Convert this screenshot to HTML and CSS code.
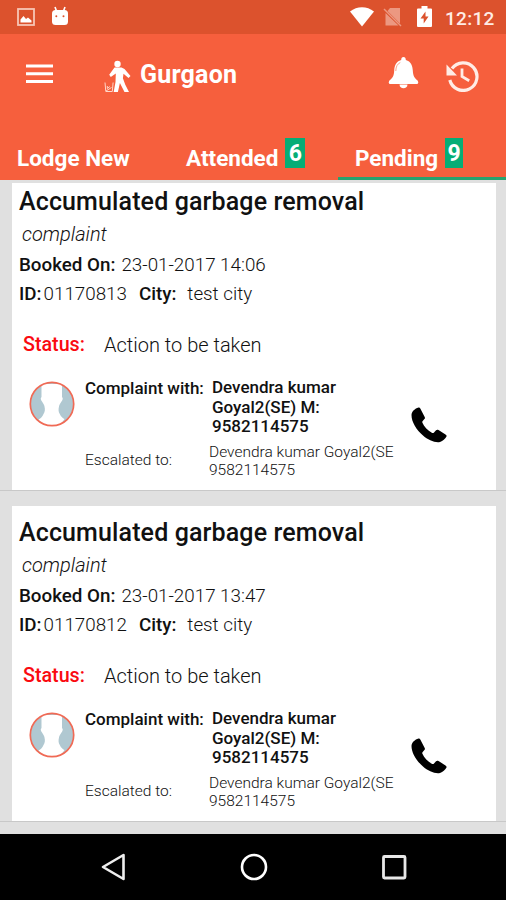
FILE: index.html
```html
<!DOCTYPE html>
<html lang="en">
  <head>
    <meta charset="utf-8">
    <title>Gurgaon</title>
    <link rel="stylesheet" href="styles.css">
  </head>
  <body>
    <!-- icons used in every complaint -->
    <svg class="defs">
      <symbol id="avatar" viewBox="0 0 46 46">
        <circle cx="23" cy="23" r="21.5" fill="#b0c8d1"/>
        <path d="M12.500 3h20.500v13c1.300 1 .8 3-.5 4.500-1 2-2.300 3-2.500 5-.8 3-.5 5.500.8 7.500 1 2.500 2.700 4 4.700 5L32 43c-5 2.500-13 2.500-18 0l-4.500-4.500c2.500-1 4-3 5-5.500 1.300-2 1.800-4.500 1-7.500-.2-2-1.500-3-2.500-5-1.300-1.500-1.800-3.500-.5-4.500z" fill="#fff"/>
        <circle cx="23" cy="23" r="21.700" fill="none" stroke="#f06a55" stroke-width="1.700"/>
      </symbol>
      <symbol id="phone" viewBox="0 0 36 36">
        <path d="M7.500.5C4 1.500.6 4.500.5 8c0 7 5 15 11.500 20.500C17 33 24 36 29 35c3-1 5-3 6.500-5.500.3-1-.2-1.600-1-2.100L27.500 23c-1-.6-2-.4-2.700.4l-2 2.300c-.5.500-1.200.5-2 .1-4-2.300-7.600-6-9.400-10-.3-.8-.2-1.300.3-1.800l1.700-1.900c.6-.7.7-1.300.3-2.200L9.300 1.400C8.900.6 8.300.3 7.500.5z"/>
      </symbol>
    </svg>

    <div class="status-bar">
      <svg class="icon-picture" width="18" height="18" viewBox="0 0 18 18">
        <rect x="1" y="1" width="16" height="16" fill="none" stroke="#f7c5b5" stroke-width="1.800"/>
        <path d="M3.500 14.500v-3l3-3.500 2.500 3 2-1.500 3.500 3v2z" fill="#fff"/>
      </svg>
      <svg class="icon-robot" width="18" height="20" viewBox="0 0 18 20">
        <path d="M4 1l1.500 4M14 1l-1.500 4" stroke="#fff" stroke-width="1.600"/>
        <rect x="1" y="4" width="16" height="15" rx="3.500" fill="#fff"/>
        <circle cx="5.300" cy="10.200" r="1" fill="#dc522d"/>
        <circle cx="12.500" cy="10.200" r="1" fill="#dc522d"/>
      </svg>
      <svg class="icon-wifi" width="24" height="20" viewBox="0 0 24 20">
        <path d="M0 4.500C7-1.300 17-1.300 24 4.500L12 19.500z" fill="#fff"/>
      </svg>
      <svg class="icon-sim" width="19" height="20" viewBox="0 0 19 20">
        <path d="M7 1h10v15.500L4.500 4z M2.500 6v12.500h13z" fill="#ec9881"/>
        <path d="M1 2l17 17" stroke="#ec9881" stroke-width="1.500"/>
      </svg>
      <svg class="icon-battery" width="15" height="22" viewBox="0 0 15 22">
        <path d="M4.500 0h6v2.500H14q1 0 1 1V20q0 1-1 1H1q-1 0-1-1V3.500q0-1 1-1h3.500z" fill="#fff"/>
        <path d="M8.500 5.500L3.500 12.500h3.200v5L11.500 10.500H8.500z" fill="#dc522d"/>
      </svg>
      <span class="clock">12:12</span>
    </div>

    <div class="toolbar">
      <svg class="icon-menu" width="27" height="20" viewBox="0 0 27 20">
        <path d="M0 2h27M0 9.800h27M0 17.600h27" stroke="#fff" stroke-width="3"/>
      </svg>
      <svg class="icon-walker" width="28" height="33" viewBox="0 0 28 33">
        <circle cx="13.500" cy="4" r="3.200" fill="#fff"/>
        <path d="M10.500 7.500h7l3 1.500 6 7-2 2-5-4.300-.6 4.500 2.400 6.500 3.700 7.300h-4.500l-4.600-9-2 9h-4.200l1.800-10L11.800 13.500l-5 3.500-1.600-2.200z" fill="#fff"/>
        <path d="M1 22.500l.8 9h6.500l.8-9M3.300 26v2.500l2.500-2M2 31l5.500-3.500" fill="none" stroke="#ffd6c8" stroke-width="1"/>
      </svg>
      <h1 class="city-name">Gurgaon</h1>
      <svg class="icon-bell" width="31" height="34" viewBox="0 0 31 34">
        <path d="M15.500 1c1.500 0 2.300 1.300 2.300 3 5.200 1.500 6.700 5.500 7 10.500.3 5.500 1.700 7.500 5 10.300q1.200 1.700-.3 3.200H1.500Q0 26.500 1.200 24.800C4.500 22 6 20 6.200 14.500c.3-5 1.800-9 7-10.500 0-1.700.8-3 2.300-3z" fill="#fff"/>
        <path d="M11.500 28.500h8c0 5-8 5-8 0z" fill="#fff"/>
        <path d="M7.800 15c.1-4.500 1.500-7 4.500-8.500" fill="none" stroke="#f9a48c" stroke-width="1"/>
      </svg>
      <svg class="icon-history" width="33" height="32" viewBox="0 0 33 32">
        <path d="M6 8.500A13.800 13.800 0 1 1 3.800 20" fill="none" stroke="#ffece5" stroke-width="3.200"/>
        <path d="M.5 4.500V15.500H11z" fill="#ffece5"/>
        <path d="M16 8.500v8l7.200 4.300" fill="none" stroke="#ffece5" stroke-width="2.800"/>
      </svg>
    </div>

    <div class="tabs">
      <div class="tab">Lodge New</div>
      <div class="tab">Attended <span class="count">6</span></div>
      <div class="tab active">Pending <span class="count">9</span></div>
    </div>

    <div class="list">
      <div class="item">
        <div class="card">
          <h2 class="title">Accumulated garbage removal</h2>
          <div class="type">complaint</div>
          <div class="line booked"><b>Booked On:</b><span>23-01-2017 14:06</span></div>
          <div class="line ident"><b>ID:</b><span class="number">01170813</span><b class="city">City:</b><span>test city</span></div>
          <div class="status"><b>Status:</b><span>Action to be taken</span></div>
          <div class="contact">
            <svg class="avatar"><use href="#avatar"/></svg>
            <div class="people">
              <b class="label">Complaint with:</b>
              <b class="person">Devendra kumar<br>Goyal2(SE) M:<br>9582114575</b>
              <span class="label-small">Escalated to:</span>
              <span class="person-small">Devendra kumar Goyal2(SE<br>9582114575</span>
            </div>
            <svg class="phone"><use href="#phone"/></svg>
          </div>
        </div>
      </div>

      <div class="item">
        <div class="card">
          <h2 class="title">Accumulated garbage removal</h2>
          <div class="type">complaint</div>
          <div class="line booked"><b>Booked On:</b><span>23-01-2017 13:47</span></div>
          <div class="line ident"><b>ID:</b><span class="number">01170812</span><b class="city">City:</b><span>test city</span></div>
          <div class="status"><b>Status:</b><span>Action to be taken</span></div>
          <div class="contact">
            <svg class="avatar"><use href="#avatar"/></svg>
            <div class="people">
              <b class="label">Complaint with:</b>
              <b class="person">Devendra kumar<br>Goyal2(SE) M:<br>9582114575</b>
              <span class="label-small">Escalated to:</span>
              <span class="person-small">Devendra kumar Goyal2(SE<br>9582114575</span>
            </div>
            <svg class="phone"><use href="#phone"/></svg>
          </div>
        </div>
      </div>
    </div>

    <div class="nav-bar">
      <svg width="28" height="30" viewBox="0 0 28 30">
        <path d="M24.500 3v24L4 15z" fill="none" stroke="#eee" stroke-width="2.600" stroke-linejoin="round"/>
      </svg>
      <svg width="28" height="30" viewBox="0 0 28 30">
        <circle cx="14" cy="15" r="12" fill="none" stroke="#fff" stroke-width="2.600"/>
      </svg>
      <svg width="28" height="30" viewBox="0 0 28 30">
        <rect x="3.500" y="4.500" width="21.500" height="21.500" rx="1" fill="none" stroke="#e8e8e8" stroke-width="2.800"/>
      </svg>
    </div>
  </body>
</html>
```

FILE: styles.css
```css
body {
  margin: 0;
  width: 506px;
  height: 900px;
  overflow: hidden;
  display: flex;
  flex-direction: column;
  background: #e0e0e0;
  color: #111;
  font-family: Roboto, "Liberation Sans", sans-serif;
}

b {
  font-weight: 500;
}

svg {
  display: block;
  flex: none;
}

.defs {
  width: 0;
  height: 0;
}

/* status bar */
.status-bar {
  flex: none;
  display: flex;
  align-items: center;
  height: 34px;
  box-sizing: border-box;
  padding-left: 17px;
  background: #dc522d;
}

.icon-robot {
  margin: -3px 0 0 16px;
}

.icon-wifi {
  margin-left: 281px;
}

.icon-sim {
  margin-left: 9px;
}

.icon-battery {
  margin-left: 15px;
}

.clock {
  margin: 2px 0 0 13px;
  color: #ffece5;
  font-size: 19px;
  font-weight: 500;
  letter-spacing: 0.3px;
}

/* toolbar */
.toolbar {
  flex: none;
  display: flex;
  align-items: center;
  height: 82px;
  padding-left: 26px;
  background: #f65f3d;
}

.icon-menu {
  margin-top: -3px;
}

.icon-walker {
  margin: 2px 0 0 51px;
}

.city-name {
  width: 97px;
  margin: 0 0 0 8px;
  color: #fff;
  font-size: 25px;
  line-height: 28px;
  font-weight: 700;
  letter-spacing: 0.2px;
}

.icon-bell {
  margin: -4px 0 0 151px;
}

.icon-history {
  margin: 1px 0 0 27px;
}

/* tabs */
.tabs {
  flex: none;
  display: flex;
  height: 64px;
  background: #f65f3d;
  border-bottom: 3px solid #e0e0e0;
}

.tab {
  width: 169px;
  height: 64px;
  box-sizing: border-box;
  padding: 20px 0 0 17px;
  display: flex;
  align-items: flex-start;
  color: #fff;
  font-size: 22.5px;
  font-weight: 700;
  line-height: 44px;
}

.active {
  width: 168px;
  border-bottom: 3px solid #28a36f;
}

.count {
  width: 20px;
  height: 30px;
  margin: 2px 0 0 7px;
  background: #05ad75;
  font-size: 23px;
  line-height: 31px;
  text-align: center;
}

.active .count {
  width: 18px;
}

/* complaints */
.list {
  flex: 1;
  overflow: hidden;
}

.item {
  height: 330px;
  border-bottom: 1px solid #c8c8c8;
  box-sizing: border-box;
  padding: 14px 10px 0 12px;
  margin-bottom: 1px;
}

/* the list is scrolled a little, so the first item starts under the tabs */
.item:first-child {
  margin-top: -22px;
}

.card {
  height: 315px;
  box-sizing: border-box;
  padding: 10px 0 0 7px;
  background: #fff;
}

.title {
  margin: 0;
  font-size: 25px;
  font-weight: 500;
  line-height: 33px;
  letter-spacing: 0.13px;
}

.type {
  margin-left: 3px;
  font-size: 20px;
  font-style: italic;
  font-weight: 300;
  line-height: 32px;
}

.line {
  display: flex;
  font-size: 18.8px;
  font-weight: 300;
  line-height: 30px;
}

.ident {
  line-height: 28px;
}

.booked span {
  margin-left: 6px;
}

.number {
  margin-left: 2px;
}

.city {
  margin: 0 11px 0 12px;
}

.status {
  display: flex;
  margin: 21px 0 0 4px;
  font-size: 20px;
  font-weight: 300;
  line-height: 32px;
}

.status b {
  width: 81px;
  color: #fa0a10;
  font-size: 19.7px;
}

.contact {
  display: flex;
  margin-top: 17px;
}

.avatar {
  width: 46px;
  height: 46px;
  margin: 3px 0 0 10px;
}

.people {
  display: grid;
  grid-template-columns: 124px 194px;
  margin-left: 10px;
}

.label,
.person {
  font-size: 17px;
  line-height: 19.7px;
}

.person {
  margin-left: 3px;
}

.label {
  margin-top: 1px;
}

.label-small,
.person-small {
  margin-top: 6px;
  font-size: 15.5px;
  font-weight: 300;
  line-height: 18px;
}

.label-small {
  margin-top: 14px;
}

.phone {
  width: 36px;
  height: 36px;
  margin: 29px 0 0 8px;
}

/* system buttons */
.nav-bar {
  flex: none;
  display: flex;
  gap: 112.5px;
  height: 66px;
  align-items: center;
  padding-left: 99px;
  background: #000;
}
```
